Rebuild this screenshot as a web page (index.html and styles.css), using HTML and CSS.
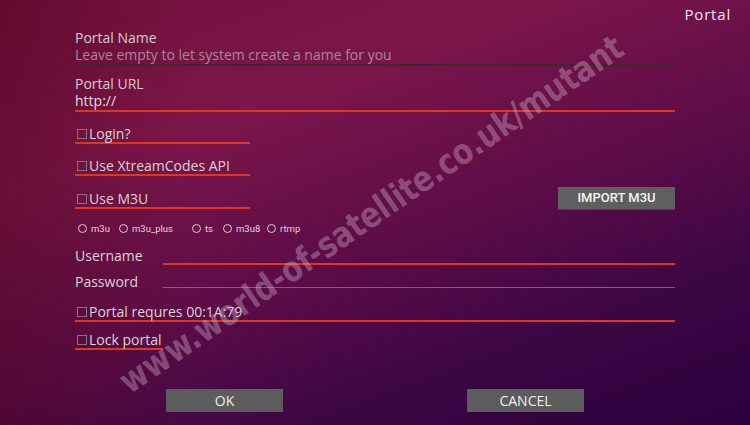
FILE: index.html
```html
<!DOCTYPE html>
<html>
<head>
<meta charset="utf-8">
<link rel="stylesheet" href="styles.css">
</head>
<body>
<div class="screen">
  <div class="title">Portal</div>
  <div class="form">
    <div class="field name-field">
      <div class="label">Portal Name</div>
      <div class="input placeholder">Leave empty to let system create a name for you</div>
    </div>
    <div class="field url-field">
      <div class="label">Portal URL</div>
      <div class="input value">http://</div>
    </div>
    <div class="check short login"><span class="box"></span>Login?</div>
    <div class="check short xtream"><span class="box"></span>Use XtreamCodes API</div>
    <div class="m3u-row">
      <div class="check short"><span class="box"></span>Use M3U</div>
      <div class="import">IMPORT M3U</div>
    </div>
    <div class="radios">
      <span class="radio r1"><span class="dot"></span>m3u</span>
      <span class="radio r2"><span class="dot"></span>m3u_plus</span>
      <span class="radio r3"><span class="dot"></span>ts</span>
      <span class="radio r4"><span class="dot"></span>m3u8</span>
      <span class="radio"><span class="dot"></span>rtmp</span>
    </div>
    <div class="cred user">
      <div class="cred-label">Username</div>
      <div class="cred-input"></div>
    </div>
    <div class="cred pass">
      <div class="cred-label">Password</div>
      <div class="cred-input"></div>
    </div>
    <div class="check full mac"><span class="box"></span>Portal requres 00:1A:79</div>
    <div class="check lock"><span class="box"></span>Lock portal</div>
  </div>
  <div class="buttons">
    <div class="btn">OK</div>
    <div class="btn">CANCEL</div>
  </div>
  <div class="watermark">www.world-of-satellite.co.uk/mutant</div>
</div>
</body>
</html>
```
FILE: styles.css
```css
* { box-sizing: border-box; }
html, body { margin: 0; padding: 0; }
body { width: 750px; height: 425px; overflow: hidden; }
.screen {
  position: relative;
  width: 750px;
  height: 425px;
  overflow: hidden;
  font-family: "Open Sans", "DejaVu Sans", sans-serif;
  color: #dcd2d8;
  background:
    linear-gradient(90deg, rgba(70, 0, 20, 0.35) 0%, rgba(70, 0, 20, 0) 25%),
    linear-gradient(160deg, #72103c 0%, #7c164a 28%, #5c0c48 55%, #3a0644 78%, #2c003c 100%);
}
.title {
  height: 30px;
  padding: 5px 19px 0 0;
  text-align: right;
  font-size: 15px;
  letter-spacing: 0.8px;
  line-height: 18px;
  color: #f2eaee;
}
.form {
  padding-left: 75px;
  width: 675px;
}
.label, .input {
  font-size: 14px;
  line-height: 16px;
  height: 16px;
  white-space: nowrap;
}
.label { color: #d6ccd2; }
.input { margin-top: 1px; }
.placeholder {
  color: #a88898;
  border-bottom: 2px solid #3a2a30;
  height: 19px;
}
.value {
  color: #e6dde2;
  border-bottom: 2px solid #e0351f;
  height: 19px;
}
.url-field { margin-top: 10px; }
.check {
  display: flex;
  align-items: center;
  font-size: 14px;
  line-height: 16px;
  height: 19px;
  border-bottom: 2px solid #e0351f;
  white-space: nowrap;
}
.check.short { width: 175px; }
.check.full { width: 600px; }
.box {
  width: 10px;
  height: 10px;
  border: 1px solid #8a7480;
  margin: 0 2px 0 2px;
  flex: none;
}
.login { margin-top: 13px; }
.xtream { margin-top: 13px; }
.m3u-row {
  display: flex;
  justify-content: space-between;
  align-items: flex-end;
  margin-top: 11px;
  width: 600px;
}
.import {
  width: 117px;
  height: 23px;
  margin-bottom: -1px;
  background: #5f5f5f;
  border-bottom: 1px solid #474747;
  color: #f4f4f4;
  font-family: Roboto, "Liberation Sans", sans-serif;
  font-weight: 500;
  font-size: 13px;
  line-height: 22px;
  text-align: center;
}
.radios {
  display: flex;
  align-items: center;
  margin-top: 14px;
  padding-left: 3px;
  height: 10px;
  font-family: Roboto, "Liberation Sans", sans-serif;
  font-size: 9.5px;
  color: #e0d6dc;
}
.radio { display: flex; align-items: center; flex: none; }
.dot {
  width: 9px;
  height: 9px;
  border: 1px solid #d8ccd4;
  border-radius: 50%;
  margin-right: 4px;
  flex: none;
}
.r1 { width: 41px; }
.r2 { width: 73px; }
.r3 { width: 31px; }
.r4 { width: 44px; }
.cred {
  display: flex;
  width: 600px;
  font-size: 14px;
  white-space: nowrap;
}
.cred-label { width: 88px; line-height: 16px; }
.cred-input { flex: 1; }
.user { margin-top: 15px; height: 17px; }
.user .cred-input { border-bottom: 2px solid #e0351f; }
.pass { margin-top: 9px; height: 14px; }
.pass .cred-input { border-bottom: 1px solid #b84a58; }
.mac { margin-top: 15px; }
.lock { margin-top: 9px; width: 88px; }
.buttons {
  position: absolute;
  left: 0;
  top: 389px;
  width: 750px;
  display: flex;
}
.btn {
  height: 23px;
  width: 117px;
  background: #5c5c5c;
  color: #eeeeee;
  font-size: 14px;
  line-height: 23px;
  text-align: center;
}
.btn:first-child { margin-left: 166px; }
.btn:last-child { margin-left: 184px; }
.watermark {
  position: absolute;
  left: 371px;
  top: 214px;
  transform: translate(-50%, -50%) rotate(-34.5deg) scale(1.08, 1.18);
  white-space: nowrap;
  font-family: "DejaVu Sans Condensed", "DejaVu Sans", sans-serif;
  font-weight: bold;
  font-size: 30px;
  color: rgba(200, 170, 190, 0.42);
}
```
